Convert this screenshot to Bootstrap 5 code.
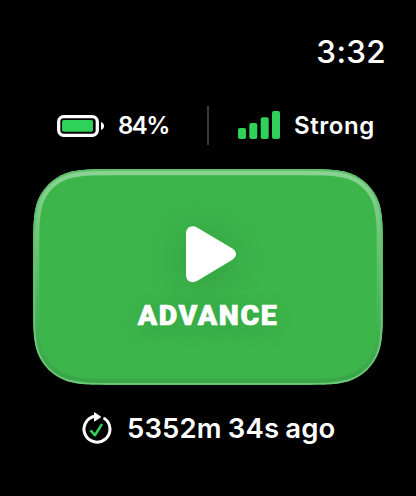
<!DOCTYPE html>
<html lang="en">
<head>
  <meta charset="UTF-8" />
  <meta name="viewport" content="width=device-width, initial-scale=1.0" />
  <title>Advance</title>
  <link rel="stylesheet" href="https://cdn.jsdelivr.net/npm/bootstrap@5.3.2/dist/css/bootstrap.min.css">
  <style>
    html, body {
      height: 100%;
      margin: 0;
      background-color: #000;
    }
    body {
      font-family: Inter, "Liberation Sans", sans-serif;
      color: #fff;
      overflow: hidden;
    }
    svg {
      display: block;
      flex-shrink: 0;
    }
    span {
      white-space: nowrap;
    }
    .clock-bar {
      height: 106px;
      padding: 31px 30px 0 0;
      font-size: 31.5px;
      line-height: 42px;
      font-weight: 500;
      letter-spacing: 0.3px;
    }
    .status-row {
      height: 39px;
      font-size: 24px;
      line-height: 39px;
      font-weight: 600;
    }
    .battery {
      width: 207px;
      padding-left: 56px;
      gap: 14px;
    }
    .battery span {
      letter-spacing: -1.6px;
    }
    .signal {
      padding-left: 29px;
      gap: 14px;
    }
    .signal span {
      letter-spacing: 0.55px;
    }
    .divider {
      width: 2px;
      background-color: #3a3a3c;
    }
    .advance-btn {
      width: 350px;
      height: 216px;
      margin: 24px auto 0;
      padding-top: 56px;
    }
    .advance-btn .shape {
      position: absolute;
      left: 0;
      top: 0;
    }
    .advance-btn .play {
      margin-left: 6px;
      filter: drop-shadow(0 5px 18px rgba(0, 0, 0, 0.15));
    }
    .advance-label {
      margin-top: 13px;
      font-family: Roboto, Inter, sans-serif;
      font-size: 28.5px;
      line-height: 36px;
      font-weight: 900;
      letter-spacing: 1.6px;
      -webkit-text-stroke: 0.7px #fff;
      text-shadow: 0 5px 26px rgba(0, 0, 0, 0.14);
    }
    .last-sync {
      padding: 24px 0 0 80px;
      gap: 13px;
      font-size: 27.5px;
      line-height: 38px;
      font-weight: 600;
    }
    .last-sync span {
      letter-spacing: 0.15px;
      word-spacing: -1px;
    }
  </style>
</head>
<body>
  <div class="clock-bar d-flex justify-content-end">
    <span id="clock">3:32</span>
  </div>

  <div class="status-row d-flex">
    <div class="battery d-flex align-items-center">
      <svg width="48" height="23" viewBox="0 0 48 23">
        <rect x="2.7" y="2.7" width="38.6" height="18.6" rx="5" fill="none" stroke="#fff" stroke-width="3.3"/>
        <rect x="6" y="6" width="31" height="11.8" rx="1.8" fill="#30d158"/>
        <path d="M45 8c2 .7 3 2.200 3 4s-1 3.300-3 4z" fill="#fff"/>
      </svg>
      <span>84%</span>
    </div>
    <div class="divider"></div>
    <div class="signal d-flex align-items-center">
      <svg width="42" height="29" viewBox="0 0 42 29" fill="#30d158">
        <rect x="0" y="17" width="8" height="11" rx="2"/>
        <rect x="11.3" y="12" width="8" height="16" rx="2"/>
        <rect x="22.7" y="6.2" width="8" height="21.8" rx="2"/>
        <rect x="34" y="0" width="8" height="28" rx="2"/>
      </svg>
      <span>Strong</span>
    </div>
  </div>

  <div class="advance-btn position-relative d-flex flex-column align-items-center">
    <svg class="shape" width="350" height="216" viewBox="0 0 350 216">
      <defs>
        <linearGradient id="rim" x1="0" y1="0" x2="0" y2="216" gradientUnits="userSpaceOnUse">
          <stop offset="0" stop-color="#8cd494"/>
          <stop offset="0.25" stop-color="#73c97e"/>
          <stop offset="0.55" stop-color="#55bb62"/>
          <stop offset="0.75" stop-color="#45ae53"/>
          <stop offset="1" stop-color="#38a546"/>
        </linearGradient>
        <linearGradient id="edge" x1="0" y1="0" x2="0" y2="216" gradientUnits="userSpaceOnUse">
          <stop offset="0" stop-color="#5bc169"/>
          <stop offset="1" stop-color="#6dca7b"/>
        </linearGradient>
        <path id="outline"></path>
        <clipPath id="inside"><use href="#outline"/></clipPath>
      </defs>
      <g clip-path="url(#inside)">
        <use href="#outline" fill="#3cb54a" stroke="url(#rim)" stroke-width="12"/>
        <use href="#outline" fill="none" stroke="url(#edge)" stroke-width="3.6"/>
      </g>
    </svg>
    <svg class="play position-relative" width="52" height="60" viewBox="0 0 52 60">
      <path d="M1 8.500C1 2.300 6.500-.500 12 2.400L47 23.200c5.400 3.200 5.400 8.500 0 11.700L12 56C6.500 58.900 1 56 1 50z" fill="#fff"/>
    </svg>
    <span class="advance-label position-relative">ADVANCE</span>
  </div>

  <div class="last-sync d-flex">
    <svg width="34" height="38" viewBox="0 0 34 38">
      <path d="M24.600 9.600A13 13 0 1 1 15 7.300" fill="none" stroke="#fff" stroke-width="3" stroke-linecap="round"/>
      <path d="M14.500 3.700v8.400l6.200-4.200z" fill="#fff" stroke="#fff" stroke-width="1" stroke-linejoin="round"/>
      <path d="M11.200 22.200l3.700 4L21.500 15.900" fill="none" stroke="#30d158" stroke-width="2.600" stroke-linecap="round" stroke-linejoin="round"/>
    </svg>
    <span>5352m 34s ago</span>
  </div>

  <script src="https://cdn.jsdelivr.net/npm/bootstrap@5.3.2/dist/js/bootstrap.bundle.min.js"></script>
  <script>
    // rounded rect with continuous corners
    function squircle(x, y, w, h, r) {
      const curve = [
        [1.528665, 0], [1.08849296, 0], [0.86840694, 0], [0.63149379, 0.07491139],
        [0.37282383, 0.16905956], [0.16905956, 0.37282383], [0.07491139, 0.63149379],
        [0, 0.86840694], [0, 1.08849296], [0, 1.528665]
      ];
      // clockwise from the top right
      const corners = [
        curve.map(([a, b]) => [x + w - a * r, y + b * r]),
        curve.map(([a, b]) => [x + w - b * r, y + h - a * r]),
        curve.map(([a, b]) => [x + a * r, y + h - b * r]),
        curve.map(([a, b]) => [x + b * r, y + a * r])
      ];
      return corners.map((pts, i) =>
        (i ? "L" : "M") + pts[0].join(" ") + "C" + pts.slice(1).map(p => p.join(" ")).join(" ")
      ).join("") + "Z";
    }

    const outline = document.getElementById("outline");
    outline.setAttribute("d", squircle(0.3, 0.3, 349.4, 215.4, 52));
  </script>
</body>
</html>
